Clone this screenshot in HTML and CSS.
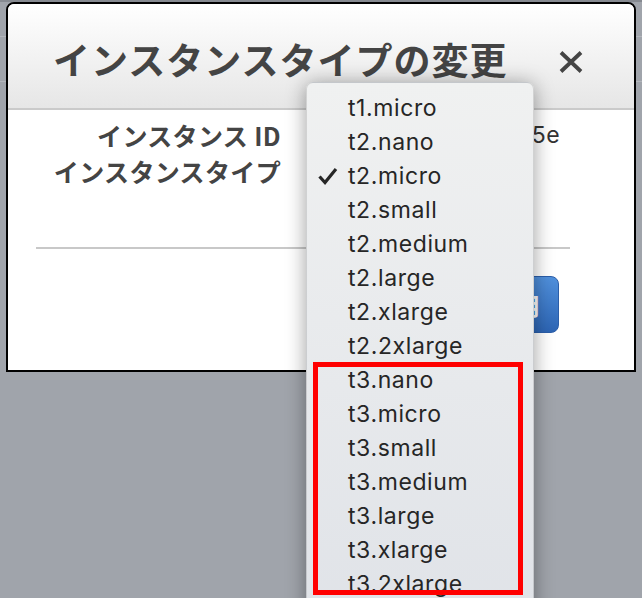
FILE: index.html
```html
<!DOCTYPE html>
<html lang="ja">
<head>
<meta charset="utf-8">
<title>インスタンスタイプの変更</title>
<link rel="stylesheet" href="styles.css">
</head>
<body>
<div class="modal">
  <div class="modal-header">
    <h1 class="title">インスタンスタイプの変更</h1>
    <button class="close" aria-label="閉じる">
      <svg width="24" height="22" viewBox="0 0 24 22"><path d="M2 1.5 L22 20.5 M22 1.5 L2 20.5" stroke="#444" stroke-width="3.8" stroke-linecap="butt" fill="none"/></svg>
    </button>
  </div>
  <div class="modal-body">
    <div class="row"><div class="label">インスタンス ID</div><div class="value">i-0a7c3e91b24d8f65e</div></div>
    <div class="row"><div class="label">インスタンスタイプ</div><div class="value"><span class="select"></span></div></div>
  </div>
  <div class="divider"></div>
  <div class="modal-footer">
    <button class="btn-apply">適用</button>
  </div>
</div>

<ul class="menu">
  <li class="item">t1.micro</li>
  <li class="item">t2.nano</li>
  <li class="item selected"><svg class="check" width="22" height="18" viewBox="0 0 22 18"><path d="M2.5 9.5 L8 15.5 L19 2" stroke="#262626" stroke-width="3.2" fill="none" stroke-linejoin="miter"/></svg>t2.micro</li>
  <li class="item">t2.small</li>
  <li class="item">t2.medium</li>
  <li class="item">t2.large</li>
  <li class="item">t2.xlarge</li>
  <li class="item">t2.2xlarge</li>
  <li class="item">t3.nano</li>
  <li class="item">t3.micro</li>
  <li class="item">t3.small</li>
  <li class="item">t3.medium</li>
  <li class="item">t3.large</li>
  <li class="item">t3.xlarge</li>
  <li class="item">t3.2xlarge</li>
</ul>
<div class="highlight"></div>
</body>
</html>
```
FILE: styles.css
```css
html, body {
  margin: 0;
  padding: 0;
  height: 100%;
  overflow: hidden;
}
body {
  background:
    linear-gradient(#868a91 0 2px, transparent 2px),
    linear-gradient(transparent 36px, #b3b6bc 36px 37px, transparent 37px 81px, #b3b6bc 81px 82px, transparent 82px),
    #a0a4ab;
  font-family: "Noto Sans CJK JP", "Noto Sans", sans-serif;
  position: relative;
}
.modal {
  margin: 2px 0 0 6px;
  width: 630px;
  box-sizing: border-box;
  border: 2px solid #000;
  border-radius: 8px 8px 0 0;
  background: #fff;
}
.modal-header {
  height: 106px;
  box-sizing: border-box;
  padding: 6px 51px 0 45px;
  display: flex;
  align-items: center;
  justify-content: space-between;
  background: linear-gradient(#ffffff, #e6e6e6);
  border-bottom: 2px solid #cacaca;
  border-radius: 6px 6px 0 0;
}
.title {
  margin: 0;
  font-size: 37px;
  line-height: 44px;
  font-weight: 700;
  color: #444;
  letter-spacing: 1px;
}
.close {
  border: 0;
  background: none;
  padding: 0;
  margin-top: 6px;
  width: 24px;
  height: 22px;
  display: block;
}
.close svg { display: block; }
.modal-body {
  padding-top: 7px;
}
.row {
  display: grid;
  grid-template-columns: 273px 1fr;
  column-gap: 27px;
  height: 36px;
  align-items: center;
}
.label {
  text-align: right;
  font-size: 25px;
  font-weight: 700;
  color: #444;
  line-height: 36px;
  letter-spacing: 0.35px;
}
.value {
  font-family: "Inter", "Liberation Sans", sans-serif;
  font-size: 23px;
  letter-spacing: 0.6px;
  color: #333;
  line-height: 36px;
  white-space: nowrap;
}
.select {
  display: inline-block;
  width: 200px;
  height: 30px;
  vertical-align: middle;
  border: 1px solid #bbb;
  border-radius: 4px;
  background: linear-gradient(#fff, #eee);
}
.divider {
  height: 2px;
  background: #c8c8c8;
  margin: 58px 64px 0 28px;
}
.modal-footer {
  display: flex;
  justify-content: flex-end;
  padding: 27px 75px 37px 0;
}
.btn-apply {
  height: 57px;
  font-family: "Noto Sans CJK JP", sans-serif;
  font-size: 24px;
  border-radius: 8px;
  padding: 0 18px;
  background: linear-gradient(#5090dc, #2d65b4);
  border: 1px solid #2b5ea9;
  color: #fff;
  font-weight: 700;
}
.menu {
  position: absolute;
  left: 306px;
  top: 82px;
  width: 228px;
  height: 540px;
  box-sizing: border-box;
  margin: 0;
  padding: 8px 0 0 0;
  list-style: none;
  border-radius: 7px;
  border: 1px solid rgba(0,0,0,0.12);
  background: linear-gradient(#f0f1f1, #e0e3e8);
  box-shadow: 0 2px 20px rgba(0,0,0,0.38);
}
.item {
  position: relative;
  height: 34px;
  line-height: 34px;
  padding-left: 41px;
  font-family: "Inter", "Liberation Sans", sans-serif;
  font-size: 23px;
  letter-spacing: 0.6px;
  color: #262626;
  white-space: nowrap;
}
.check {
  position: absolute;
  left: 10px;
  top: 8px;
}
.highlight {
  position: absolute;
  left: 313px;
  top: 362px;
  width: 210px;
  height: 233px;
  box-sizing: border-box;
  border: 5px solid #ff0000;
}
```
